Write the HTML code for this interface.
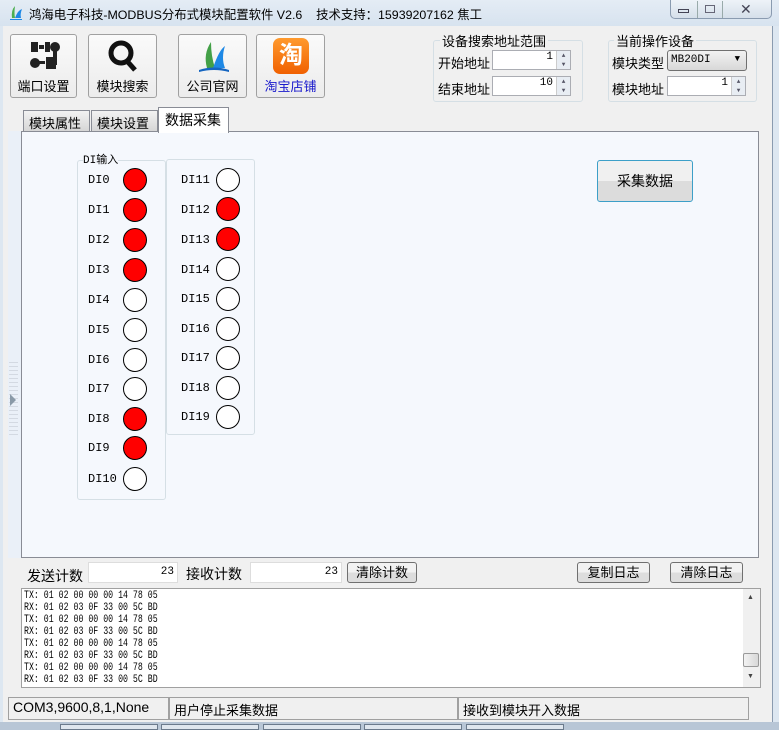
<!DOCTYPE html>
<html><head><meta charset="utf-8"><style>
*{box-sizing:border-box;margin:0;padding:0}
body{width:779px;height:730px;overflow:hidden;position:relative;background:#f0f0f0;font-family:"Liberation Sans","Noto Sans CJK SC",sans-serif;font-size:13px;color:#000}
.a{position:absolute;white-space:nowrap}
.tb{border:1px solid #a0a0a0;border-radius:3px;background:linear-gradient(#fafafa,#ececec);text-align:center}
.tb span{position:absolute;left:0;right:0;bottom:2px;font-size:13px}
.grp{border:1px solid #d5dfe5;border-radius:3px}
.inp{background:#fff;border:1px solid #abadb3;text-align:right;font-family:"Liberation Mono",monospace;font-size:11px;padding-right:3px}
.spin{position:absolute;right:0;top:0;width:14px;height:100%;border-left:1px solid #ccc;background:#e8edf3;font-size:6px;line-height:9px;text-align:center;color:#556}
.btn{border:1px solid #707070;border-radius:3px;background:linear-gradient(#f2f2f2 50%,#dddddd 50%);text-align:center;font-size:13px}
.led{position:absolute;width:24px;height:24px;border-radius:50%;border:1px solid #000;background:#fff}
.r{background:#f00}
.lb{position:absolute;font-family:"Liberation Mono","Noto Sans CJK SC",monospace;font-size:12px}
.log{font-family:"Liberation Mono",monospace;font-size:11px;line-height:12px;transform:scaleX(.75);transform-origin:left}
.tab{position:absolute;top:110px;width:67px;height:22px;border:1px solid #898c95;background:linear-gradient(#f2f2f2,#d6d6d6);padding:2px 0 0 5px;font-size:13px;white-space:nowrap;overflow:hidden}
</style></head><body>
<div class="a" style="left:0;top:0;width:779px;height:26px;background:linear-gradient(#e4ecf5,#d7e3ef)"></div>
<div class="a" style="left:9px;top:5px;width:14px;height:16px"><svg width="14" height="16"><path d="M3 13 Q2 5 6 1 Q5 8 6 13Z" fill="#4caf50"/><path d="M6 13 Q9 5 13 4 Q11 9 12 13Z" fill="#1e88e5"/><path d="M1 14 H13 V15 H1Z" fill="#1e88e5"/></svg></div>
<div class="a" style="left:29px;top:5px;font-size:12.4px">鸿海电子科技-MODBUS分布式模块配置软件 V2.6 &nbsp;&nbsp;&nbsp;技术支持：15939207162 焦工</div>
<div class="a" style="left:670px;top:0;width:102px;height:19px;border:1px solid #8a9bb0;border-top:none;border-radius:0 0 5px 5px;background:linear-gradient(#eef3f8,#d5dfea)"></div>
<div class="a" style="left:697px;top:1px;width:1px;height:17px;background:#9aa"></div>
<div class="a" style="left:722px;top:1px;width:1px;height:17px;background:#9aa"></div>
<div class="a" style="left:678px;top:9px;width:11px;height:4px;border:1px solid #445"></div>
<div class="a" style="left:705px;top:5px;width:10px;height:8px;border:1px solid #667"></div>
<div class="a" style="left:740px;top:1px;font-size:14px;color:#445">✕</div>
<div class="a" style="left:772px;top:26px;width:7px;height:696px;background:#dde7f1;border-left:1px solid #8a9bb0"></div>
<div class="a" style="left:0;top:26px;width:3px;height:696px;background:#dde7f1"></div>
<div class="a tb" style="left:10px;top:34px;width:67px;height:64px"><svg class="a" style="left:14px;top:4px" width="36" height="36"><rect x="6" y="3" width="7" height="10" fill="#222"/><rect x="14" y="6" width="5" height="4" fill="#222"/><rect x="20" y="3" width="5" height="10" fill="#222"/><circle cx="30" cy="8" r="5" fill="#222"/><rect x="28" y="10" width="4" height="16" fill="#222"/><circle cx="10" cy="24" r="5" fill="#222"/><rect x="14" y="22" width="6" height="3" fill="#222"/><rect x="21" y="18" width="10" height="12" fill="#222"/></svg><span>端口设置</span></div>
<div class="a tb" style="left:88px;top:34px;width:69px;height:64px"><svg class="a" style="left:18px;top:3px" width="34" height="36"><circle cx="14" cy="15" r="10" fill="none" stroke="#111" stroke-width="5"/><path d="M20 23 L28 32" stroke="#111" stroke-width="5"/></svg><span>模块搜索</span></div>
<div class="a tb" style="left:178px;top:34px;width:69px;height:64px"><svg class="a" style="left:16px;top:3px" width="38" height="38"><path d="M12 30 Q8 16 16 4 Q16 18 20 30Z" fill="#43a047"/><path d="M18 30 Q24 12 30 8 Q26 20 30 30Z" fill="#1e88e5"/><path d="M4 32 Q19 27 34 32 L34 34 Q19 30 4 34Z" fill="#1565c0"/></svg><span>公司官网</span></div>
<div class="a tb" style="left:256px;top:34px;width:69px;height:64px"><div class="a" style="left:16px;top:3px;width:36px;height:36px;border-radius:7px;background:linear-gradient(#ff9a2e,#f06000);color:#fff;font-size:24px;line-height:36px;font-weight:bold">淘</div><span style="color:#1a1acc">淘宝店铺</span></div>
<div class="a grp" style="left:433px;top:40px;width:150px;height:62px"></div>
<div class="a" style="left:440px;top:31px;background:#f0f0f0;padding:0 2px">设备搜索地址范围</div>
<div class="a" style="left:438px;top:53px">开始地址</div>
<div class="a inp" style="left:492px;top:50px;width:79px;height:20px;padding-right:17px">1<div class="spin">▲<br>▼</div></div>
<div class="a" style="left:438px;top:79px">结束地址</div>
<div class="a inp" style="left:492px;top:76px;width:79px;height:20px;padding-right:17px">10<div class="spin">▲<br>▼</div></div>
<div class="a grp" style="left:608px;top:40px;width:149px;height:62px"></div>
<div class="a" style="left:614px;top:31px;background:#f0f0f0;padding:0 2px">当前操作设备</div>
<div class="a" style="left:612px;top:53px">模块类型</div>
<div class="a" style="left:667px;top:50px;width:80px;height:21px;border:1px solid #707070;border-radius:3px;background:linear-gradient(#f2f2f2,#d8d8d8);font-family:'Liberation Mono',monospace;font-size:11px;padding:3px 0 0 3px">MB20DI<span style="position:absolute;right:6px;top:3px;font-size:9px">▼</span></div>
<div class="a" style="left:612px;top:79px">模块地址</div>
<div class="a inp" style="left:667px;top:76px;width:79px;height:20px;padding-right:17px">1<div class="spin">▲<br>▼</div></div>
<div class="tab" style="left:23px">模块属性</div>
<div class="tab" style="left:91px">模块设置</div>
<div class="a" style="left:21px;top:131px;width:738px;height:427px;border:1px solid #898c95;background:#f5f8fd"></div>
<div class="a" style="left:158px;top:107px;width:71px;height:26px;border:1px solid #898c95;border-bottom:none;background:#fff;padding:2px 6px;font-size:14px">数据采集</div>
<div class="a" style="left:8px;top:131px;width:13px;height:427px;background:#eaf0f8"></div>
<div class="a" style="left:9px;top:362px;width:9px;height:75px;background:repeating-linear-gradient(#d3d9e2 0 1px,transparent 1px 4px)"></div>
<div class="a" style="left:10px;top:394px;width:0;height:0;border-top:6px solid transparent;border-bottom:6px solid transparent;border-left:6px solid #8a9aa8"></div>
<div class="a grp" style="left:77px;top:160px;width:89px;height:340px"></div>
<div class="a grp" style="left:166px;top:159px;width:89px;height:276px"></div>
<div class="a lb" style="left:83px;top:151px;background:#f5f8fd;font-size:11px">DI输入</div>
<div class="lb" style="left:88px;top:173px">DI0</div><div class="led r" style="left:123px;top:168px"></div>
<div class="lb" style="left:88px;top:203px">DI1</div><div class="led r" style="left:123px;top:198px"></div>
<div class="lb" style="left:88px;top:233px">DI2</div><div class="led r" style="left:123px;top:228px"></div>
<div class="lb" style="left:88px;top:263px">DI3</div><div class="led r" style="left:123px;top:258px"></div>
<div class="lb" style="left:88px;top:293px">DI4</div><div class="led" style="left:123px;top:288px"></div>
<div class="lb" style="left:88px;top:323px">DI5</div><div class="led" style="left:123px;top:318px"></div>
<div class="lb" style="left:88px;top:353px">DI6</div><div class="led" style="left:123px;top:348px"></div>
<div class="lb" style="left:88px;top:382px">DI7</div><div class="led" style="left:123px;top:377px"></div>
<div class="lb" style="left:88px;top:412px">DI8</div><div class="led r" style="left:123px;top:407px"></div>
<div class="lb" style="left:88px;top:441px">DI9</div><div class="led r" style="left:123px;top:436px"></div>
<div class="lb" style="left:88px;top:472px">DI10</div><div class="led" style="left:123px;top:467px"></div>
<div class="lb" style="left:181px;top:173px">DI11</div><div class="led" style="left:216px;top:168px"></div>
<div class="lb" style="left:181px;top:203px">DI12</div><div class="led r" style="left:216px;top:197px"></div>
<div class="lb" style="left:181px;top:233px">DI13</div><div class="led r" style="left:216px;top:227px"></div>
<div class="lb" style="left:181px;top:263px">DI14</div><div class="led" style="left:216px;top:257px"></div>
<div class="lb" style="left:181px;top:292px">DI15</div><div class="led" style="left:216px;top:287px"></div>
<div class="lb" style="left:181px;top:322px">DI16</div><div class="led" style="left:216px;top:317px"></div>
<div class="lb" style="left:181px;top:351px">DI17</div><div class="led" style="left:216px;top:346px"></div>
<div class="lb" style="left:181px;top:381px">DI18</div><div class="led" style="left:216px;top:376px"></div>
<div class="lb" style="left:181px;top:410px">DI19</div><div class="led" style="left:216px;top:405px"></div>
<div class="a" style="left:597px;top:160px;width:96px;height:42px;border:1px solid #3c9fc8;border-radius:3px;background:linear-gradient(#f0f0f0 50%,#dcdcdc 50%);text-align:center;line-height:40px;font-size:14px">采集数据</div>
<div class="a" style="left:27px;top:566px;font-size:14px">发送计数</div>
<div class="a inp" style="left:88px;top:562px;width:90px;height:21px;border-color:#ddd;padding-top:3px">23</div>
<div class="a" style="left:186px;top:564px;font-size:14px">接收计数</div>
<div class="a inp" style="left:250px;top:562px;width:92px;height:21px;border-color:#ddd;padding-top:3px">23</div>
<div class="a btn" style="left:347px;top:562px;width:70px;height:21px;line-height:19px">清除计数</div>
<div class="a btn" style="left:577px;top:562px;width:73px;height:21px;line-height:19px">复制日志</div>
<div class="a btn" style="left:670px;top:562px;width:73px;height:21px;line-height:19px">清除日志</div>
<div class="a" style="left:21px;top:588px;width:740px;height:100px;border:1px solid #a0a0a0;background:#fff"></div>
<div class="a" style="left:743px;top:589px;width:17px;height:98px;background:#f0f0f0"></div>
<div class="a" style="left:743px;top:653px;width:16px;height:14px;border:1px solid #999;border-radius:2px;background:linear-gradient(90deg,#f2f2f2,#d8d8d8)"></div>
<div class="a" style="left:747px;top:594px;font-size:7px;color:#444">▲</div>
<div class="a" style="left:747px;top:673px;font-size:7px;color:#444">▼</div>
<div class="a log" style="left:24px;top:590px">TX: 01 02 00 00 00 14 78 05<br>RX: 01 02 03 0F 33 00 5C BD<br>TX: 01 02 00 00 00 14 78 05<br>RX: 01 02 03 0F 33 00 5C BD<br>TX: 01 02 00 00 00 14 78 05<br>RX: 01 02 03 0F 33 00 5C BD<br>TX: 01 02 00 00 00 14 78 05<br>RX: 01 02 03 0F 33 00 5C BD</div>
<div class="a" style="left:7px;top:696px;width:765px;height:25px;background:#f0f0f0"></div>
<div class="a" style="left:8px;top:697px;width:161px;height:23px;border:1px solid #a0a0a0;padding:1px 4px;font-size:14px">COM3,9600,8,1,None</div>
<div class="a" style="left:169px;top:697px;width:289px;height:23px;border:1px solid #a0a0a0;padding:2px 4px">用户停止采集数据</div>
<div class="a" style="left:458px;top:697px;width:291px;height:23px;border:1px solid #a0a0a0;padding:2px 4px">接收到模块开入数据</div>
<div class="a" style="left:0;top:722px;width:779px;height:8px;background:#b8c6d6"></div>
<div class="a" style="left:60px;top:724px;width:98px;height:6px;background:#dfe6ee;border:1px solid #6b7a8c"></div>
<div class="a" style="left:161px;top:724px;width:98px;height:6px;background:#dfe6ee;border:1px solid #6b7a8c"></div>
<div class="a" style="left:263px;top:724px;width:98px;height:6px;background:#dfe6ee;border:1px solid #6b7a8c"></div>
<div class="a" style="left:364px;top:724px;width:98px;height:6px;background:#dfe6ee;border:1px solid #6b7a8c"></div>
<div class="a" style="left:466px;top:724px;width:98px;height:6px;background:#dfe6ee;border:1px solid #6b7a8c"></div>
</body></html>
